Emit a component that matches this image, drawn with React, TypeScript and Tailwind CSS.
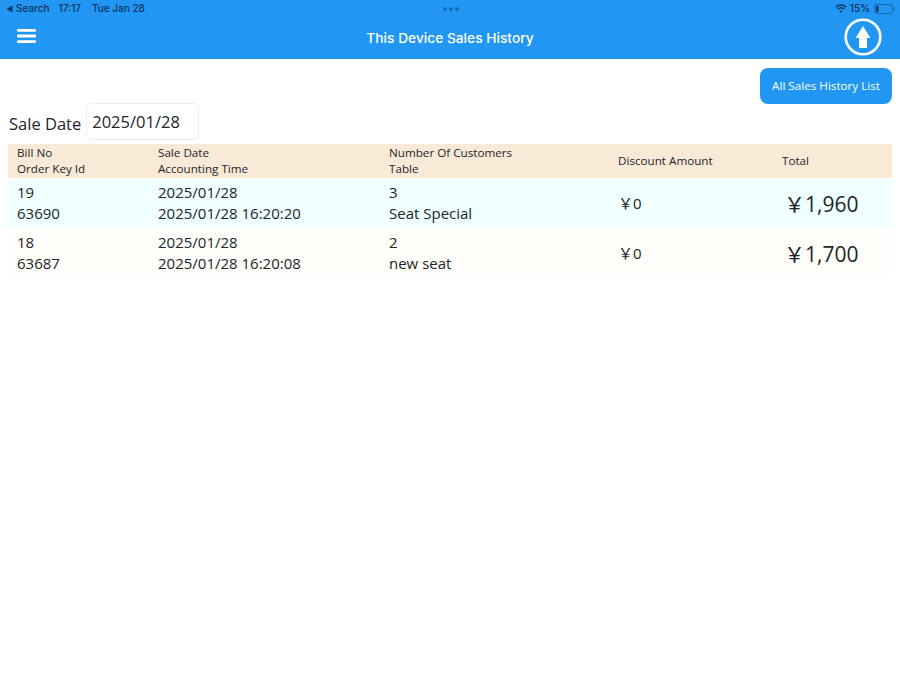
const cols = "grid grid-cols-[141px_230px_230px_164px_119px]";
const open = "font-['Open_Sans',sans-serif]";
const rows = [
  { bg: "bg-[#f0ffff]", a: "19", b: "63690", c: "2025/01/28", d: "2025/01/28 16:20:20", e: "3", f: "Seat Special", g: "0", h: "1,960" },
  { bg: "bg-[#fffefa]", a: "18", b: "63687", c: "2025/01/28", d: "2025/01/28 16:20:08", e: "2", f: "new seat", g: "0", h: "1,700" },
];

function Yen({ v }: { v: string }) {
  return (
    <span className="inline-flex items-baseline">
      <span className="font-['Noto_Sans_CJK_JP',sans-serif]">￥</span>
      <span>{v}</span>
    </span>
  );
}

export default function App() {
  return (
    <div className={`w-[900px] h-[675px] bg-white overflow-hidden text-[#212529] ${open}`}>
      <header className="h-[59px] bg-[#2196f3] font-['Inter',sans-serif]">
        <div className="h-[17px] flex items-center justify-between pl-[6px] pr-[5px] text-[10px] font-medium text-[#0b3560]">
          <div className="flex items-center w-[300px]">
            <svg width="7" height="8" viewBox="0 0 7 8" className="mr-[3px]"><path d="M6.5 0.5V7.5L0.5 4Z" fill="#0b3560" /></svg>
            <span>Search</span>
            <span className="ml-[9px]">17:17</span>
            <span className="ml-[11px]">Tue Jan 28</span>
          </div>
          <div className="flex gap-[2px] ml-[1px]">
            <span className="w-[4px] h-[4px] rounded-full bg-[#1a6bb5]" />
            <span className="w-[4px] h-[4px] rounded-full bg-[#1a6bb5]" />
            <span className="w-[4px] h-[4px] rounded-full bg-[#1a6bb5]" />
          </div>
          <div className="flex items-center justify-end w-[300px]">
            <svg width="12" height="9" viewBox="0 0 12 9" className="mr-[3px]" fill="none" stroke="#0b3560" strokeWidth="1.5">
              <path d="M0.8 3.2C3.8 0.4 8.2 0.4 11.2 3.2" />
              <path d="M2.8 5.1C4.7 3.5 7.3 3.5 9.2 5.1" />
              <path d="M6 8.8L4.4 6.9C5.4 6.2 6.6 6.2 7.6 6.9Z" fill="#0b3560" stroke="none" />
            </svg>
            <span className="mr-[4px]">15%</span>
            <svg width="21" height="10" viewBox="0 0 21 10" fill="none">
              <rect x="0.5" y="0.5" width="18" height="9" rx="2.5" stroke="#0b3560" strokeOpacity="0.5" />
              <rect x="2" y="2" width="2.5" height="6" rx="0.5" fill="#0b3560" />
              <path d="M19.8 3.4C20.5 3.7 20.8 4.3 20.8 5C20.8 5.7 20.5 6.3 19.8 6.6Z" fill="#0b3560" fillOpacity="0.5" />
            </svg>
          </div>
        </div>
        <div className="h-[42px] relative flex items-center justify-between pl-[17px] pr-[18px]">
          <svg width="19" height="14" viewBox="0 0 19 14" className="mb-[4px]" fill="white">
            <rect x="0" y="0" width="19" height="2.8" rx="1" />
            <rect x="0" y="5.6" width="19" height="2.8" rx="1" />
            <rect x="0" y="11.2" width="19" height="2.8" rx="1" />
          </svg>
          <span className="absolute left-0 right-0 top-[12px] text-center text-[13.75px] leading-[18px] font-medium text-white">This Device Sales History</span>
          <svg width="38" height="38" viewBox="0 0 38 38" fill="none" className="mb-[2px]">
            <circle cx="19" cy="19" r="17.3" stroke="white" strokeWidth="2.6" />
            <path d="M19 8L26.5 20H23V30H15V20H11.5Z" fill="white" />
          </svg>
        </div>
      </header>

      <main className="px-[8px]">
        <div className="flex justify-end pt-[9px]">
          <button className="h-[36px] w-[132px] rounded-[8px] bg-[#2196f3] text-white text-[11.66px] flex items-center justify-center">All Sales History List</button>
        </div>
        <div className="flex items-end h-[37px] mt-[-1px]">
          <span className="text-[16.5px] leading-[22px] pl-[1px] mb-[5px]">Sale Date</span>
          <div className="ml-[5px] w-[113px] h-[37px] border border-[#eeeeee] rounded-[5px] bg-white pl-[5px] text-[16.5px] leading-[36px]">2025/01/28</div>
        </div>
        <div className="mt-[4px]">
          <div className={`${cols} h-[34px] bg-[#f9e9d7] text-[11.66px] leading-[16px] items-center`}>
            <div className="pl-[9px]"><div>Bill No</div><div>Order Key Id</div></div>
            <div className="pl-[9px]"><div>Sale Date</div><div>Accounting Time</div></div>
            <div className="pl-[10px]"><div>Number Of Customers</div><div>Table</div></div>
            <div className="pl-[9px]">Discount Amount</div>
            <div className="pl-[9px]">Total</div>
          </div>
          {rows.map((r) => (
            <div key={r.a} className={`${cols} ${r.bg} h-[49px] mt-[1px] mb-[1px] pb-[1px] text-[15px] leading-[21px] items-center`}>
              <div className="pl-[9px]"><div>{r.a}</div><div>{r.b}</div></div>
              <div className="pl-[9px]"><div>{r.c}</div><div>{r.d}</div></div>
              <div className="pl-[10px]"><div>{r.e}</div><div>{r.f}</div></div>
              <div className="pl-[9px]"><Yen v={r.g} /></div>
              <div className="pl-[11px] text-[21px] leading-[28px]"><Yen v={r.h} /></div>
            </div>
          ))}
        </div>
      </main>
    </div>
  );
}
